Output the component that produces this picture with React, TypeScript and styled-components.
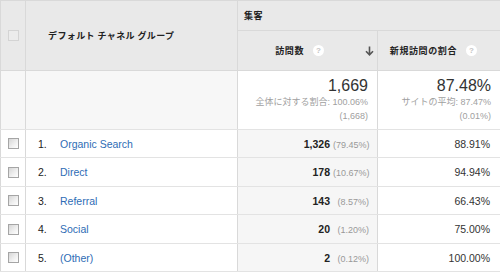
import React from "react";
import styled, { createGlobalStyle } from "styled-components";

const GlobalStyle = createGlobalStyle`
  html, body {
    margin: 0;
    padding: 0;
    background: #ffffff;
  }
  body {
    font-family: "Liberation Sans", Arial, "Noto Sans CJK JP", sans-serif;
    color: #333333;
  }
`;

const Table = styled.table`
  width: 500px;
  border-collapse: collapse;
  table-layout: fixed;
  border: 1px solid #d9d9d9;
`;

const HeadCell = styled.th<{ $align?: "left" | "right" }>`
  background: #e9e9e9;
  border: 1px solid #d9d9d9;
  padding: 0;
  font-family: "Noto Sans CJK JP", "Liberation Sans", sans-serif;
  font-size: 9px;
  font-weight: 700;
  color: #222222;
  text-align: ${(p) => p.$align || "left"};
  vertical-align: middle;
`;

const GroupTitle = styled.div`
  padding-left: 6px;
  letter-spacing: 0.5px;
`;

const DimTitle = styled.div`
  padding-left: 22px;
  letter-spacing: 0.4px;
`;

const MetricHead = styled.div<{ $pad: number }>`
  display: flex;
  align-items: center;
  justify-content: flex-end;
  padding-right: ${(p) => p.$pad}px;
  letter-spacing: 0.6px;
`;

const Help = styled.span`
  display: inline-flex;
  align-items: center;
  justify-content: center;
  width: 11px;
  height: 11px;
  margin-left: 9px;
  border-radius: 50%;
  background: #ffffff;
  color: #c4c4c4;
  font-family: "Liberation Sans", Arial, sans-serif;
  font-size: 8px;
  font-weight: 700;
  letter-spacing: 0;
`;

const SortArrow = styled.svg`
  margin-left: 41px;
  display: block;
`;

const Check = styled.span<{ $muted?: boolean }>`
  display: block;
  box-sizing: border-box;
  width: 11px;
  height: 11px;
  margin-left: 7px;
  border: 1px solid ${(p) => (p.$muted ? "#d4d4d4" : "#a5a5a5")};
  background: ${(p) =>
    p.$muted ? "#ececec" : "linear-gradient(135deg, #d6d6d6 0%, #efefef 55%, #ffffff 100%)"};
`;

const Row = styled.tr<{ $h: number }>`
  height: ${(p) => p.$h}px;
`;

const Cell = styled.td<{ $bg?: string; $align?: "left" | "right" }>`
  border: 1px solid #e3e3e3;
  border-left-color: #d9d9d9;
  border-right-color: #d9d9d9;
  padding: 0;
  background: ${(p) => p.$bg || "#ffffff"};
  text-align: ${(p) => p.$align || "left"};
  vertical-align: middle;
  font-size: 10.5px;
`;

const Summary = styled.div`
  padding: 0 9px 0 0;
  text-align: right;
`;

const BigValue = styled.div`
  font-size: 16px;
  line-height: 18px;
  color: #333333;
`;

const SubText = styled.div`
  font-family: "Liberation Sans", Arial, "Noto Sans CJK JP", sans-serif;
  font-size: 9px;
  line-height: 14px;
  color: #a0a0a0;
`;

const Dim = styled.div`
  display: flex;
  align-items: center;
`;

const Index = styled.span`
  width: 22px;
  padding-left: 12px;
  color: #222222;
`;

const Link = styled.a`
  color: #2e6cb5;
  text-decoration: none;
`;

const Visits = styled.div`
  display: flex;
  justify-content: flex-end;
  align-items: baseline;
  padding-right: 8px;
`;

const Count = styled.span`
  font-weight: 700;
  color: #222222;
`;

const Pct = styled.span`
  width: 36px;
  margin-left: 3px;
  text-align: right;
  font-size: 9px;
  color: #999999;
`;

const Ratio = styled.div`
  padding-right: 10px;
  color: #333333;
`;

const rows = [
  { n: 1, name: "Organic Search", visits: "1,326", pct: "(79.45%)", ratio: "88.91%", h: 28 },
  { n: 2, name: "Direct", visits: "178", pct: "(10.67%)", ratio: "94.94%", h: 29 },
  { n: 3, name: "Referral", visits: "143", pct: "(8.57%)", ratio: "66.43%", h: 28 },
  { n: 4, name: "Social", visits: "20", pct: "(1.20%)", ratio: "75.00%", h: 29 },
  { n: 5, name: "(Other)", visits: "2", pct: "(0.12%)", ratio: "100.00%", h: 28 },
];

export default function App() {
  return (
    <>
      <GlobalStyle />
      <Table>
        <colgroup>
          <col style={{ width: 25 }} />
          <col style={{ width: 212 }} />
          <col style={{ width: 140 }} />
          <col style={{ width: 123 }} />
        </colgroup>
        <thead>
          <Row $h={30}>
            <HeadCell rowSpan={2}>
              <Check $muted />
            </HeadCell>
            <HeadCell rowSpan={2}>
              <DimTitle>デフォルト チャネル グループ</DimTitle>
            </HeadCell>
            <HeadCell colSpan={2}>
              <GroupTitle>集客</GroupTitle>
            </HeadCell>
          </Row>
          <Row $h={40}>
            <HeadCell $align="right">
              <MetricHead $pad={3}>
                訪問数
                <Help>?</Help>
                <SortArrow width="9" height="10" viewBox="0 0 9 10">
                  <path d="M4.5 0.5v8M1 5.2l3.5 3.6L8 5.2" stroke="#555" strokeWidth="1.6" fill="none" />
                </SortArrow>
              </MetricHead>
            </HeadCell>
            <HeadCell $align="right">
              <MetricHead $pad={23}>
                新規訪問の割合
                <Help>?</Help>
              </MetricHead>
            </HeadCell>
          </Row>
        </thead>
        <tbody>
          <Row $h={59}>
            <Cell $bg="#f7f7f7" />
            <Cell $bg="#f7f7f7" />
            <Cell>
              <Summary>
                <BigValue>1,669</BigValue>
                <SubText>全体に対する割合: 100.06%</SubText>
                <SubText>(1,668)</SubText>
              </Summary>
            </Cell>
            <Cell>
              <Summary>
                <BigValue>87.48%</BigValue>
                <SubText>サイトの平均: 87.47%</SubText>
                <SubText>(0.01%)</SubText>
              </Summary>
            </Cell>
          </Row>
          {rows.map((r) => (
            <Row $h={r.h} key={r.n}>
              <Cell>
                <Check />
              </Cell>
              <Cell>
                <Dim>
                  <Index>{r.n}.</Index>
                  <Link href="#">{r.name}</Link>
                </Dim>
              </Cell>
              <Cell $bg="#f6f6f6">
                <Visits>
                  <Count>{r.visits}</Count>
                  <Pct>{r.pct}</Pct>
                </Visits>
              </Cell>
              <Cell $align="right">
                <Ratio>{r.ratio}</Ratio>
              </Cell>
            </Row>
          ))}
        </tbody>
      </Table>
    </>
  );
}
